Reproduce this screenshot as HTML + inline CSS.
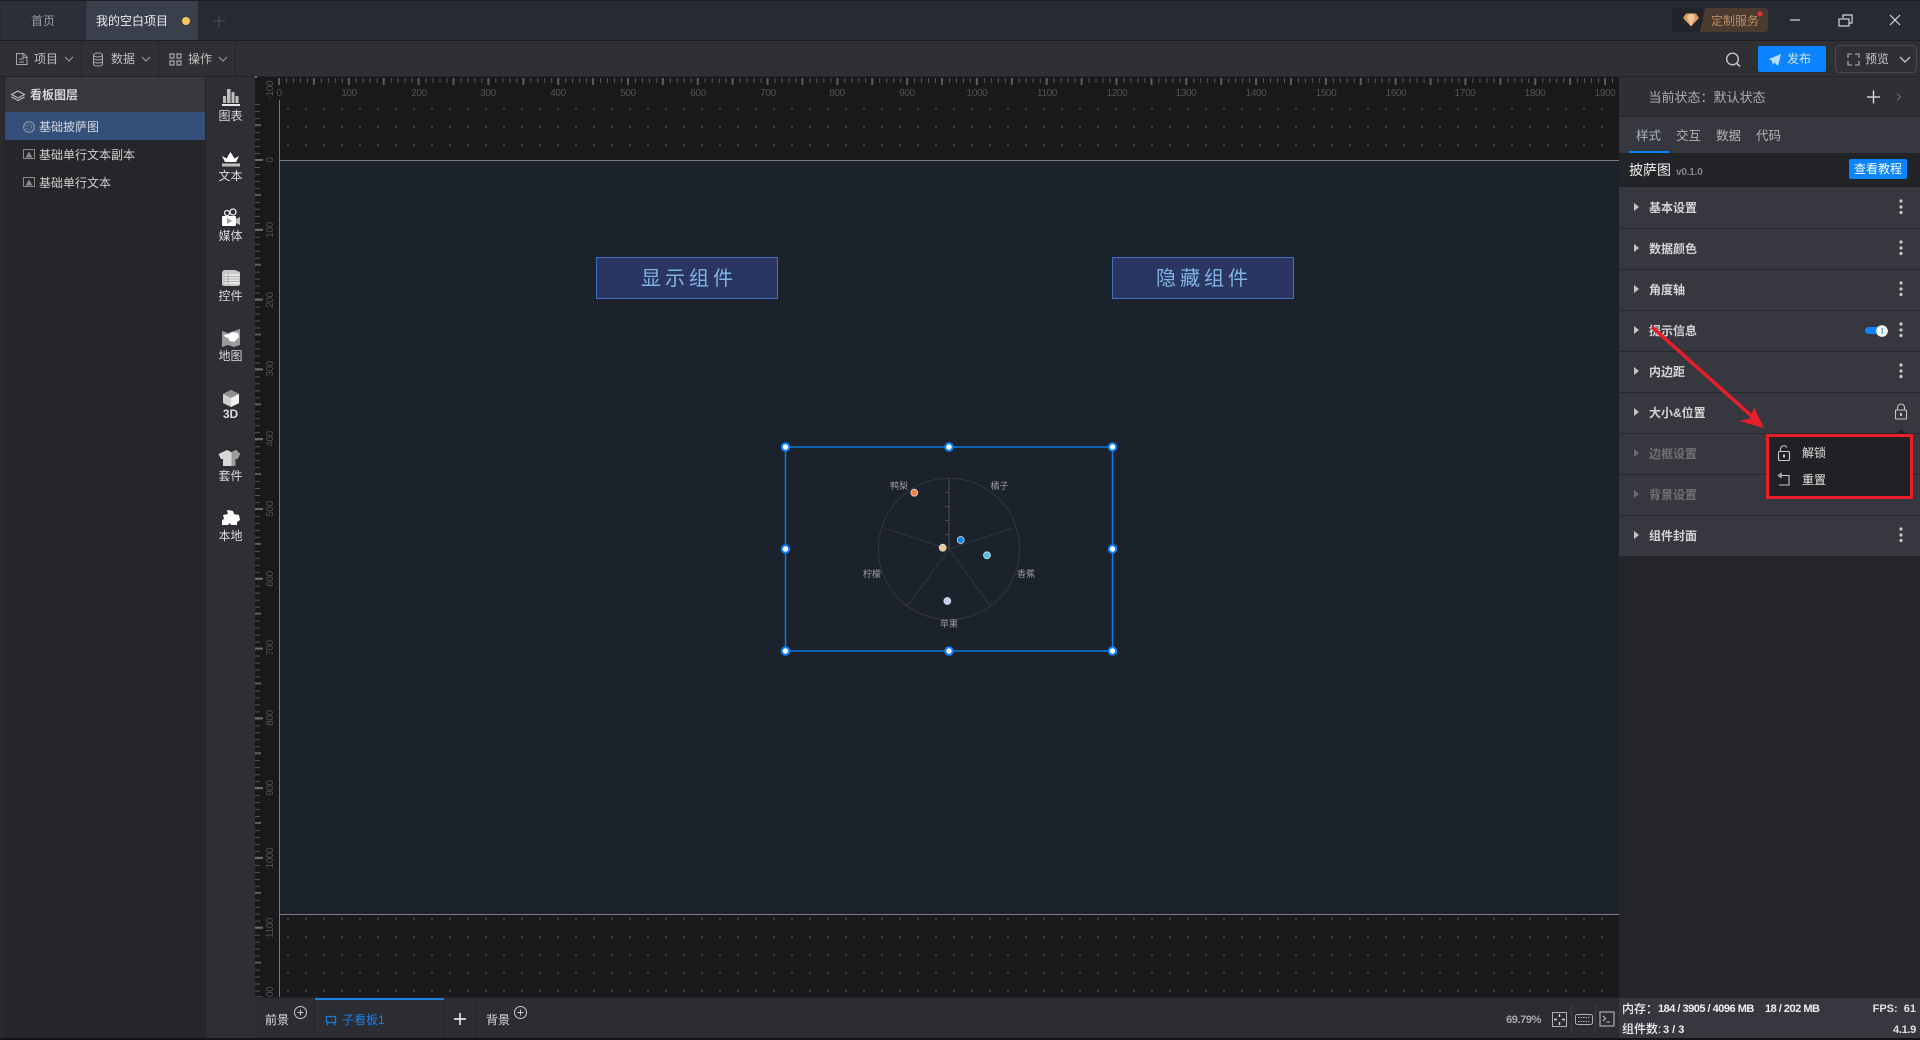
<!DOCTYPE html>
<html lang="zh">
<head>
<meta charset="utf-8">
<title>看板</title>
<style>
html,body{margin:0;padding:0;background:#111;width:1920px;height:1040px;overflow:hidden}
svg{display:block;position:absolute;left:0;top:0}
text{font-family:"Liberation Sans","Noto Sans CJK SC",sans-serif;font-size:12px}
.r{font-size:10px;fill:#525252;text-anchor:middle;letter-spacing:-.4px}
.row{fill:#d4d4d4;font-weight:700}
.dim{fill:#6f7074;font-weight:700}
.lab{fill:#dcdcdc;text-anchor:middle}
.c{font-size:9px;fill:#9a9ca4;text-anchor:middle}
</style>
</head>
<body>
<svg width="1920" height="1040" viewBox="0 0 1920 1040">
<defs>
<pattern id="dots" x="287" y="108" width="18" height="18" patternUnits="userSpaceOnUse"><rect width="2" height="2" fill="#3c3c3e"/></pattern>
<pattern id="ts" x="279" y="78" width="6.979" height="20" patternUnits="userSpaceOnUse"><rect width="1" height="5" fill="#555"/></pattern>
<pattern id="tm" x="278" y="78" width="34.895" height="20" patternUnits="userSpaceOnUse"><rect width="2" height="7" fill="#5c5c5c"/></pattern>
<pattern id="ls" x="255" y="160" width="20" height="6.979" patternUnits="userSpaceOnUse"><rect width="5" height="1" fill="#555"/></pattern>
<pattern id="lm" x="255" y="159" width="20" height="34.895" patternUnits="userSpaceOnUse"><rect width="6" height="2" fill="#5c5c5c"/></pattern>
<pattern id="ll" x="255" y="159" width="20" height="69.79" patternUnits="userSpaceOnUse"><rect width="8" height="2" fill="#6c6c6c"/></pattern>
</defs>

<!-- top bar -->
<rect width="1920" height="41" fill="#262a33"/>
<rect y="0" width="1920" height="1" fill="#1d1e21"/>
<rect x="1" y="1" width="84" height="39" fill="#2a2f38"/>
<rect x="86" y="1" width="112" height="39" fill="#3a3f4c"/>
<rect y="40" width="1920" height="1" fill="#1c1d20"/>
<text x="31" y="25" fill="#969ca6">首页</text>
<text x="96" y="25" fill="#ececec">我的空白项目</text>
<circle cx="186" cy="21" r="4" fill="#fdc45e"/>
<path d="M213 21h12M219 15v12" stroke="#3f444e" stroke-width="1.6"/>

<!-- customize pill -->
<rect x="1672" y="8" width="96" height="24" rx="3" fill="#222429"/>
<path d="M1705 8h60a3 3 0 0 1 3 3v18a3 3 0 0 1-3 3h-65z" fill="#4b3a30"/>
<path d="M1683 18l3-4.500h10l3 4.500-8 8.500z" fill="#d99a66"/>
<path d="M1687 18l2-4.500h4l2 4.500-4 8z" fill="#f0c49a"/>
<text x="1711" y="25" fill="#bf8f66" font-size="12">定制服务</text>
<circle cx="1760" cy="14" r="2.500" fill="#e5333a"/>
<path d="M1790 20h10" stroke="#d8d8d8" stroke-width="1.200"/>
<rect x="1839" y="19" width="10" height="7" fill="none" stroke="#d8d8d8" stroke-width="1.200"/>
<path d="M1843 18v-3h9v8h-3" fill="none" stroke="#d8d8d8" stroke-width="1.200"/>
<path d="M1890 15l10 10M1900 15l-10 10" stroke="#d8d8d8" stroke-width="1.200"/>

<!-- toolbar -->
<rect y="41" width="1920" height="36" fill="#2f3034"/>
<rect y="76" width="1920" height="1" fill="#232427"/>
<rect x="81" y="41" width="1" height="35" fill="#232427"/>
<rect x="158" y="41" width="1" height="35" fill="#232427"/>
<rect x="235" y="41" width="1" height="35" fill="#232427"/>
<path d="M16.500 53.500h7l3.500 3.500v7.500h-10.500zM23 53.500v4h4M19 59h5M19 62h5" fill="none" stroke="#a8a8a8" stroke-width="1"/>
<text x="34" y="63" fill="#c2c2c2">项目</text>
<path d="M65 57l4 4 4-4" fill="none" stroke="#a0a0a0"/>
<ellipse cx="98" cy="55" rx="4.500" ry="2" fill="none" stroke="#a8a8a8"/>
<path d="M93.500 55v9c0 2.600 9 2.600 9 0v-9M93.500 58c0 2.600 9 2.600 9 0M93.500 61c0 2.600 9 2.600 9 0" fill="none" stroke="#a8a8a8"/>
<text x="111" y="63" fill="#c2c2c2">数据</text>
<path d="M142 57l4 4 4-4" fill="none" stroke="#a0a0a0"/>
<path d="M170 54h4v4h-4zM177 54h4v4h-4zM170 61h4v4h-4zM177 61h4v4h-4z" fill="none" stroke="#a8a8a8" stroke-width="1.200"/>
<text x="188" y="63" fill="#c2c2c2">操作</text>
<path d="M219 57l4 4 4-4" fill="none" stroke="#a0a0a0"/>

<circle cx="1732.500" cy="59" r="5.800" fill="none" stroke="#c4c4c4" stroke-width="1.400"/>
<path d="M1737 63.500l3 3" stroke="#c4c4c4" stroke-width="1.600"/>
<rect x="1758" y="46" width="68" height="26" rx="2" fill="#0a84ff"/>
<path d="M1769 59l12-5-3 12-3.500-3.500-2 2.500-.5-4z" fill="#bcdcff"/>
<text x="1787" y="63" fill="#d6e8fb">发布</text>
<rect x="1835.500" y="45.500" width="81" height="27" rx="4" fill="none" stroke="#47484c"/>
<path d="M1848 58v-4h4M1855 54h4v4M1859 61v4h-4M1852 65h-4v-4" fill="none" stroke="#b5b5b5" stroke-width="1.100"/>
<text x="1865" y="63" fill="#c8c8c8">预览</text>
<path d="M1900 57l5 5 5-5" fill="none" stroke="#c8c8c8" stroke-width="1.300"/>

<!-- left side -->
<rect y="77" width="5" height="963" fill="#2a2b2e"/>
<rect x="4" y="77" width="1" height="963" fill="#222326"/>
<rect x="5" y="77" width="200" height="963" fill="#252629"/>
<rect x="5" y="77" width="200" height="35" fill="#37383e"/>
<rect x="5" y="112" width="200" height="28" fill="#34507a"/>
<path d="M18 91l6.500 3.500-6.500 3.500-6.500-3.500zM11.500 97l6.500 3.500 6.500-3.500" fill="none" stroke="#c0c0c0" stroke-width="1.100"/>
<text x="30" y="99" fill="#d4d4d4" font-weight="700">看板图层</text>
<circle cx="29" cy="127" r="5.300" fill="none" stroke="#8c98ab" stroke-width="1.200"/>
<circle cx="29" cy="127" r="2.600" fill="none" stroke="#8c98ab" stroke-dasharray="1.500 1.200"/>
<text x="39" y="131" fill="#d4d8de">基础披萨图</text>
<rect x="23.500" y="149.500" width="11" height="9" fill="none" stroke="#8a8a8a"/>
<path d="M25.500 157.500l3.500-6 3.500 6z" fill="#8a8a8a"/>
<text x="39" y="159" fill="#d0d0d0">基础单行文本副本</text>
<rect x="23.500" y="177.500" width="11" height="9" fill="none" stroke="#8a8a8a"/>
<path d="M25.500 185.500l3.500-6 3.500 6z" fill="#8a8a8a"/>
<text x="39" y="187" fill="#d0d0d0">基础单行文本</text>

<!-- icon bar -->
<rect x="205" y="77" width="1" height="963" fill="#232427"/>
<rect x="206" y="77" width="49" height="963" fill="#2e2f35"/>
<path d="M223 103V96h3v7zM227 103V89h3.500v14zM231.500 103V92h3v11zM235.500 103v-7h3v7z" fill="#bdbdbd"/>
<rect x="222" y="104" width="18" height="2" fill="#e6e6e6"/>
<text class="lab" x="230.500" y="120">图表</text>
<path d="M225 162l-3-6 4.500 2.500 4-6.500 4 6.500 4.500-2.500-3 6z" fill="#fff"/>
<rect x="222" y="163.500" width="18" height="3" fill="#bdbdbd"/>
<text class="lab" x="230.500" y="180">文本</text>
<circle cx="227" cy="213" r="2.500" fill="none" stroke="#e8e8e8" stroke-width="1.300"/>
<circle cx="233" cy="212" r="3" fill="none" stroke="#e8e8e8" stroke-width="1.300"/>
<rect x="222" y="216" width="14" height="10" rx="1" fill="#fff"/>
<path d="M236 219l4-2v8l-4-2z" fill="#bdbdbd"/>
<path d="M227 218l5 3-5 3z" fill="#9a9a9a"/>
<text class="lab" x="230.500" y="240">媒体</text>
<path d="M222 272l2-2h11l5 2v13l-2 1h-14l-2-1z" fill="#c8c8c8"/>
<rect x="225" y="274" width="14" height="10" fill="#e9e9e9"/>
<path d="M225 276.500h14M225 279h14M225 281.500h14M228 274v10" stroke="#9c9c9c" stroke-width=".8"/>
<text class="lab" x="230.500" y="300">控件</text>
<path d="M222 331l6 2 6-2 6-2v16l-6 2-6-2-6 2z" fill="#9c9c9c"/>
<path d="M224 335l5-1 3-2 6 1 1 4-3 3-2 2-4-1-2-3-3-1z" fill="#fff"/>
<text class="lab" x="230.500" y="360">地图</text>
<path d="M231 390l8 4v9l-8 4-8-4v-9z" fill="#cfcfcf"/>
<path d="M223 394l8 4 8-4-8-4z" fill="#8e8e8e"/>
<path d="M231 398v9l8-4v-9z" fill="#f2f2f2"/>
<text class="lab" x="230.500" y="418" font-weight="700">3D</text>
<path d="M226.500 450l4 2h1l4-2 4 4-2.500 5h-2v7h-12.500v-7h-2l-2.500-5z" fill="#d8d8d8" transform="translate(.5 0)"/>
<path d="M231.500 452h1l4-2 3.500 4-2.500 5h-2v7h-4z" fill="#9c9c9c"/>
<text class="lab" x="230.500" y="480">套件</text>
<path d="M228 510l5 1 1 3 5 1 1 5-3 2v3h-6l-1-2-2 2h-6v-5l2-1-1-4 5-1-1-3z" fill="#fff"/>
<text class="lab" x="230.500" y="540">本地</text>

<!-- ruler / canvas -->
<rect x="255" y="77" width="1364" height="921" fill="#19191b"/>
<rect x="279" y="100" width="1340" height="898" fill="#1a1a1c"/>
<rect x="279" y="100" width="1340" height="60" fill="url(#dots)"/>
<rect x="279" y="914" width="1340" height="84" fill="url(#dots)"/>
<rect x="279" y="160" width="1340" height="754" fill="#1b222b"/>
<rect x="279" y="78" width="1340" height="8" fill="url(#ts)"/>
<rect x="278" y="78" width="1341" height="8" fill="url(#tm)"/>
<rect x="255" y="100" width="8" height="898" fill="url(#ls)"/>
<rect x="255" y="100" width="8" height="898" fill="url(#lm)"/>
<rect x="255" y="100" width="8" height="898" fill="url(#ll)"/>
<rect x="255" y="76" width="2" height="2" fill="#777"/>
<g>
<text class="r" x="279" y="96">0</text><text class="r" x="349" y="96">100</text><text class="r" x="419" y="96">200</text><text class="r" x="488" y="96">300</text><text class="r" x="558" y="96">400</text><text class="r" x="628" y="96">500</text><text class="r" x="698" y="96">600</text><text class="r" x="768" y="96">700</text><text class="r" x="837" y="96">800</text><text class="r" x="907" y="96">900</text><text class="r" x="977" y="96">1000</text><text class="r" x="1047" y="96">1100</text><text class="r" x="1117" y="96">1200</text><text class="r" x="1186" y="96">1300</text><text class="r" x="1256" y="96">1400</text><text class="r" x="1326" y="96">1500</text><text class="r" x="1396" y="96">1600</text><text class="r" x="1465" y="96">1700</text><text class="r" x="1535" y="96">1800</text><text class="r" x="1605" y="96">1900</text>
</g>
<g>
<text class="r" transform="rotate(-90 273 90)" x="273" y="90">-100</text>
<text class="r" transform="rotate(-90 273 160)" x="273" y="160">0</text>
<text class="r" transform="rotate(-90 273 230)" x="273" y="230">100</text>
<text class="r" transform="rotate(-90 273 300)" x="273" y="300">200</text>
<text class="r" transform="rotate(-90 273 369)" x="273" y="369">300</text>
<text class="r" transform="rotate(-90 273 439)" x="273" y="439">400</text>
<text class="r" transform="rotate(-90 273 509)" x="273" y="509">500</text>
<text class="r" transform="rotate(-90 273 579)" x="273" y="579">600</text>
<text class="r" transform="rotate(-90 273 648)" x="273" y="648">700</text>
<text class="r" transform="rotate(-90 273 718)" x="273" y="718">800</text>
<text class="r" transform="rotate(-90 273 788)" x="273" y="788">900</text>
<text class="r" transform="rotate(-90 273 858)" x="273" y="858">1000</text>
<text class="r" transform="rotate(-90 273 928)" x="273" y="928">1100</text>
<text class="r" transform="rotate(-90 273 997)" x="273" y="997">1200</text>
</g>
<rect x="279" y="100" width="1" height="898" fill="#7a7a7a"/>
<rect x="279" y="160" width="1340" height="1" fill="#7e7e7e"/>
<rect x="279" y="914" width="1340" height="1" fill="#7e7e7e"/>

<!-- buttons -->
<rect x="596.500" y="257.500" width="181" height="41" fill="#2b3562" stroke="#3f70c4"/>
<text x="689" y="285" text-anchor="middle" fill="#7fb3e2" style="font-size:20px;letter-spacing:4px">显示组件</text>
<rect x="1112.500" y="257.500" width="181" height="41" fill="#2b3562" stroke="#3f70c4"/>
<text x="1204" y="285" text-anchor="middle" fill="#7fb3e2" style="font-size:20px;letter-spacing:4px">隐藏组件</text>

<!-- chart -->
<circle cx="949" cy="549" r="70.700" fill="none" stroke="#34363d" stroke-width="1"/>
<path d="M949 549L1016.200 527.200M949 549L990.600 606.200M949 549L907.400 606.200M949 549L881.800 527.200" stroke="#34363d"/>
<path d="M949 478V549" stroke="#3c3e46" stroke-width="1.500"/>
<path d="M945 492.500h4M945 506.500h4M945 520.500h4M945 534.500h4" stroke="#4a4c54"/>
<text class="c" x="899" y="489">鸭梨</text>
<text class="c" x="999.500" y="489">橘子</text>
<text class="c" x="1026" y="577">香蕉</text>
<text class="c" x="949" y="627">苹果</text>
<text class="c" x="872" y="577">柠檬</text>
<g stroke="#d8d8d8" stroke-width=".8">
<circle cx="914.300" cy="492.700" r="3.500" fill="#ee7f3f"/>
<circle cx="960.700" cy="540" r="3.500" fill="#1287ea"/>
<circle cx="987" cy="555.300" r="3.500" fill="#4fc3e8"/>
<circle cx="947.300" cy="601" r="3.500" fill="#bcd0ee"/>
<circle cx="942.700" cy="547.700" r="3.500" fill="#eec592"/>
</g>
<rect x="785.500" y="447" width="327" height="204" fill="none" stroke="#0a7ae0" stroke-width="1.500"/>
<g fill="#fff" stroke="#0a84ff" stroke-width="2">
<circle cx="785.500" cy="447" r="3.700"/><circle cx="949" cy="447" r="3.700"/><circle cx="1112.500" cy="447" r="3.700"/>
<circle cx="785.500" cy="549" r="3.700"/><circle cx="1112.500" cy="549" r="3.700"/>
<circle cx="785.500" cy="651" r="3.700"/><circle cx="949" cy="651" r="3.700"/><circle cx="1112.500" cy="651" r="3.700"/>
</g>

<!-- bottom bar -->
<rect x="255" y="998" width="1364" height="40" fill="#2c2d32"/>
<rect x="255" y="997" width="1364" height="1" fill="#232427"/>
<rect x="314" y="998" width="1" height="40" fill="#232427"/>
<rect x="444" y="998" width="1" height="40" fill="#232427"/>
<rect x="475" y="998" width="1" height="40" fill="#232427"/>
<rect x="315" y="998" width="129" height="2" fill="#1a7fe0"/>
<text x="265" y="1024" fill="#dcdcdc">前景</text>
<circle cx="300.500" cy="1012.500" r="6" fill="none" stroke="#c8c8c8"/>
<path d="M297.500 1012.500h6M300.500 1009.500v6" stroke="#c8c8c8"/>
<path d="M326.500 1016.500h9v6h-9zM328 1022.500l-1 3M334 1022.500l1 3" fill="none" stroke="#1a78d8" stroke-width="1.300"/>
<text x="342" y="1024" fill="#1a80e6">子看板1</text>
<path d="M454 1019h12M460 1013v12" stroke="#e2e2e2" stroke-width="1.700"/>
<text x="486" y="1024" fill="#dcdcdc">背景</text>
<circle cx="520.500" cy="1012.500" r="6" fill="none" stroke="#c8c8c8"/>
<path d="M517.500 1012.500h6M520.500 1009.500v6" stroke="#c8c8c8"/>
<text x="1541" y="1023" text-anchor="end" fill="#a8a8a8" font-weight="700" style="font-size:11px;letter-spacing:-.4px">69.79%</text>
<rect x="1552.500" y="1012.500" width="14" height="14" fill="none" stroke="#b0b0b0"/>
<path d="M1559.500 1014v3M1559.500 1022v3M1554 1019.500h3M1562 1019.500h3" stroke="#d8d8d8" stroke-width="1.400"/>
<rect x="1571" y="1004" width="1" height="30" fill="#3c3d42"/>
<rect x="1575.500" y="1014.500" width="17" height="10" rx="2" fill="none" stroke="#b0b0b0"/>
<path d="M1578 1017.500h12M1578 1021.500h12" stroke="#b0b0b0" stroke-dasharray="1.500 1"/>
<rect x="1595" y="1004" width="1" height="30" fill="#3c3d42"/>
<rect x="1600" y="1012" width="14" height="14" fill="none" stroke="#9a9a9a" stroke-width="1.400"/>
<path d="M1603 1016l2.500 2.500-2.500 2.500M1606.500 1022h3.500" fill="none" stroke="#c8c8c8"/>

<!-- right panel -->
<rect x="1619" y="77" width="301" height="963" fill="#252629"/>
<rect x="1619" y="77" width="301" height="39" fill="#2f3035"/>
<rect x="1619" y="116" width="301" height="1" fill="#25262a"/>
<rect x="1619" y="117" width="301" height="36" fill="#37383f"/>
<rect x="1619" y="153" width="301" height="34" fill="#232427"/>
<text x="1648.500" y="102" fill="#adadad" style="font-size:13px">当前状态：默认状态</text>
<path d="M1867 97h13M1873.500 90.500v13" stroke="#cfcfcf" stroke-width="1.500"/>
<path d="M1897 93.500l3.500 3.500-3.500 3.500" fill="none" stroke="#6c6d72"/>
<text x="1636" y="140" fill="#aab4c2" style="font-size:12.500px">样式</text>
<text x="1676" y="140" fill="#b4b4b4" style="font-size:12.500px">交互</text>
<text x="1716" y="140" fill="#b4b4b4" style="font-size:12.500px">数据</text>
<text x="1756" y="140" fill="#b4b4b4" style="font-size:12.500px">代码</text>
<rect x="1629" y="151" width="40" height="2" fill="#0a84ff"/>
<text x="1629" y="175" fill="#f0f0f0" style="font-size:14px">披萨图</text>
<text x="1676" y="175" fill="#85868a" font-weight="700" style="font-size:10px;letter-spacing:-.2px">v0.1.0</text>
<rect x="1849" y="159" width="58" height="20" rx="2" fill="#0a84ff"/>
<text x="1854" y="173" fill="#fff">查看教程</text>

<rect x="1619" y="187" width="301" height="369" fill="#37383f"/>
<g fill="#27282b">
<rect x="1619" y="228" width="301" height="1"/><rect x="1619" y="269" width="301" height="1"/><rect x="1619" y="310" width="301" height="1"/><rect x="1619" y="351" width="301" height="1"/><rect x="1619" y="392" width="301" height="1"/><rect x="1619" y="433" width="301" height="1"/><rect x="1619" y="474" width="301" height="1"/><rect x="1619" y="515" width="301" height="1"/>
</g>
<g fill="#c4c4c4">
<path d="M1634 203v8l5-4z"/><path d="M1634 244v8l5-4z"/><path d="M1634 285v8l5-4z"/><path d="M1634 326v8l5-4z"/><path d="M1634 367v8l5-4z"/><path d="M1634 408v8l5-4z"/><path d="M1634 531v8l5-4z"/>
</g>
<g fill="#6c6d72"><path d="M1634 449v8l5-4z"/><path d="M1634 490v8l5-4z"/></g>
<text class="row" x="1649" y="212">基本设置</text>
<text class="row" x="1649" y="253">数据颜色</text>
<text class="row" x="1649" y="294">角度轴</text>
<text class="row" x="1649" y="335">提示信息</text>
<text class="row" x="1649" y="376">内边距</text>
<text class="row" x="1649" y="417">大小&amp;位置</text>
<text class="dim" x="1649" y="458">边框设置</text>
<text class="dim" x="1649" y="499">背景设置</text>
<text class="row" x="1649" y="540">组件封面</text>
<g fill="#c8c8c8">
<circle cx="1901" cy="201" r="1.600"/><circle cx="1901" cy="207" r="1.600"/><circle cx="1901" cy="212.500" r="1.600"/>
<circle cx="1901" cy="242" r="1.600"/><circle cx="1901" cy="248" r="1.600"/><circle cx="1901" cy="253.500" r="1.600"/>
<circle cx="1901" cy="283" r="1.600"/><circle cx="1901" cy="289" r="1.600"/><circle cx="1901" cy="294.500" r="1.600"/>
<circle cx="1901" cy="324" r="1.600"/><circle cx="1901" cy="330" r="1.600"/><circle cx="1901" cy="335.500" r="1.600"/>
<circle cx="1901" cy="365" r="1.600"/><circle cx="1901" cy="371" r="1.600"/><circle cx="1901" cy="376.500" r="1.600"/>
<circle cx="1901" cy="529" r="1.600"/><circle cx="1901" cy="535" r="1.600"/><circle cx="1901" cy="540.500" r="1.600"/>
</g>
<rect x="1865" y="327" width="22" height="7" rx="3.500" fill="#0a84ff"/>
<circle cx="1882" cy="331" r="5.800" fill="#fff"/>
<rect x="1881.500" y="328" width="1.400" height="6" fill="#4a9eff"/>
<rect x="1895.500" y="410" width="11" height="9" rx="1" fill="none" stroke="#c4c4c4" stroke-width="1.100"/>
<path d="M1897.500 410v-2.500a3.500 3.500 0 0 1 7 0V410" fill="none" stroke="#c4c4c4" stroke-width="1.100"/>
<rect x="1900" y="413" width="2" height="3" fill="#c4c4c4"/>

<!-- popup -->
<path d="M1896 434l5-5 5 5z" fill="#212125"/>
<rect x="1767.500" y="435.500" width="144" height="62" fill="#212125" stroke="#e81f2a" stroke-width="3"/>
<rect x="1778.500" y="451.500" width="11" height="9" rx="1" fill="none" stroke="#c8c8c8" stroke-width="1.100"/>
<path d="M1780.500 451.500v-2.500a3.500 3.500 0 0 1 6.500-1.500" fill="none" stroke="#c8c8c8" stroke-width="1.100"/>
<rect x="1783" y="454.500" width="2" height="3" fill="#c8c8c8"/>
<text x="1802" y="457" fill="#c4c4c4" font-weight="500">解锁</text>
<path d="M1781 475.500h8v9.500h-10M1781 473.500v4l-2.500-2z" fill="none" stroke="#c8c8c8" stroke-width="1.100"/>
<text x="1802" y="484" fill="#c8c8c8" font-weight="500">重置</text>

<!-- red arrow -->
<path d="M1652 327L1755 419" stroke="#e81f2a" stroke-width="3.500"/>
<path d="M1764 428l-25-7 11-2.500 4-11z" fill="#e81f2a"/>

<!-- status -->
<rect x="1619" y="998" width="301" height="40" fill="#37383f"/>
<text x="1622" y="1013" fill="#f0f0f0" font-weight="500">内存：</text>
<text x="1658" y="1012" fill="#f0f0f0" font-weight="700" style="font-size:11px;letter-spacing:-.5px">184 / 3905 / 4096 MB</text>
<text x="1765" y="1012" fill="#f0f0f0" font-weight="700" style="font-size:11px;letter-spacing:-.5px">18 / 202 MB</text>
<text x="1916" y="1012" text-anchor="end" fill="#e0e0e0" font-weight="700" style="font-size:11px">FPS:&#160;&#160;61</text>
<text x="1622" y="1033" fill="#f0f0f0" font-weight="500">组件数:</text>
<text x="1663" y="1033" fill="#f0f0f0" font-weight="700" style="font-size:11px">3 / 3</text>
<text x="1916" y="1033" text-anchor="end" fill="#e0e0e0" font-weight="700" style="font-size:11px;letter-spacing:-.3px">4.1.9</text>

<!-- bottom strip -->
<rect y="1038" width="1920" height="2" fill="#111214"/>
</svg>
</body>
</html>
